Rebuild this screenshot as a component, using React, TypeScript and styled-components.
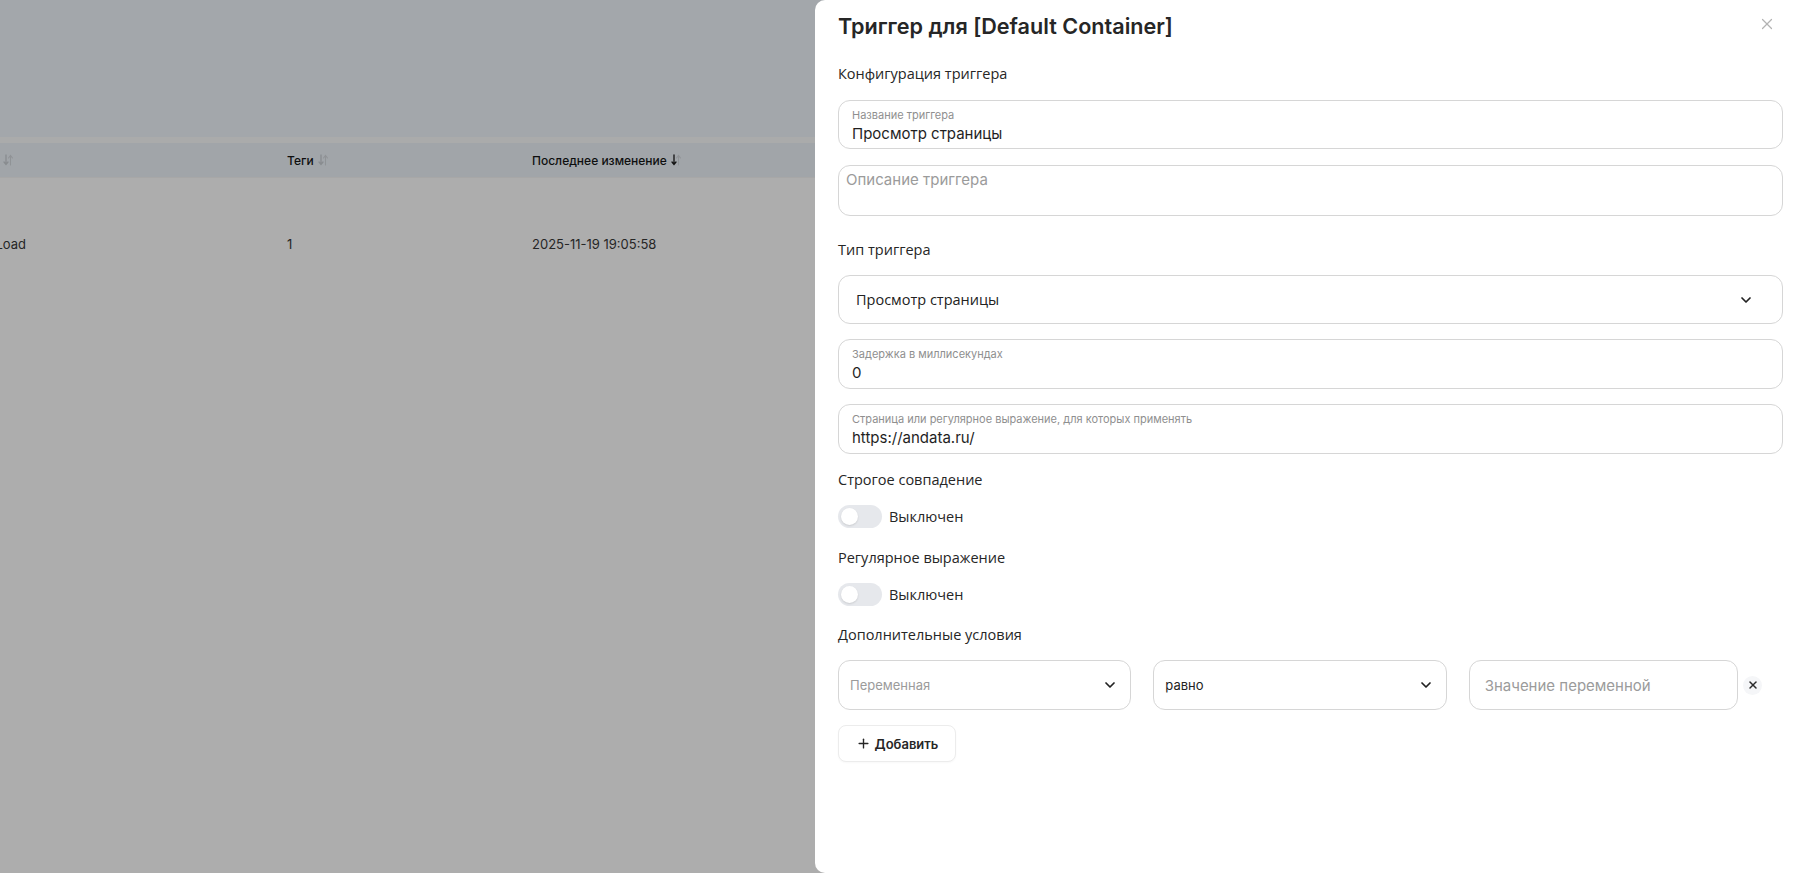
import * as React from 'react';
import styled, { createGlobalStyle } from 'styled-components';
import { X, ChevronDown, Plus } from 'lucide-react';

const GlobalStyle = createGlobalStyle`
  html, body {
    margin: 0;
    padding: 0;
    height: 100%;
    overflow: hidden;
    font-family: Inter, 'Noto Sans', sans-serif;
    color: #1f1f1f;
  }
  * {
    box-sizing: border-box;
  }
`;

/* ---------- list page under the drawer ---------- */

const Page = styled.div`
  height: 100vh;
  background: #ffffff;
  overflow: hidden;
`;

const TopArea = styled.div`
  height: 137px;
  background: #f0f7fc;
`;

const HeadDivider = styled.div`
  height: 6px;
  background: #fbfcfd;
`;

const TableGrid = styled.div`
  display: grid;
  grid-template-columns: 345px 245px 1fr;
  margin-left: -58px;
  align-items: center;
`;

const TableHead = styled(TableGrid)`
  height: 34px;
  background: #edf4fa;
  font-size: 12px;
  font-weight: 500;
  color: #161616;
`;

const TableRow = styled(TableGrid)`
  height: 132px;
  border-top: 1px solid #f7f7f7;
  font-size: 13px;
  color: #383838;
`;

const HeadCell = styled.div`
  display: flex;
  align-items: center;
  gap: 4px;
  white-space: nowrap;
`;

const Cell = styled.div`
  white-space: nowrap;
`;

const SortIcon = ({ active }: { active?: 'down' }) => (
  <svg width="10" height="12" viewBox="0 0 10 12" fill="none">
    <path
      d="M3 1v9M1 8l2 2.5L5 8"
      stroke={active === 'down' ? '#1a1a1a' : '#c9ced3'}
      strokeWidth="1.3"
      strokeLinecap="round"
    />
    <path d="M7.5 11V2M5.5 4l2-2.5 2 2.5" stroke="#d5d9dd" strokeWidth="1.1" strokeLinecap="round" />
  </svg>
);

const Overlay = styled.div`
  position: fixed;
  inset: 0;
  background: rgba(0, 0, 0, 0.32);
`;

/* ---------- drawer ---------- */

const Drawer = styled.aside`
  position: fixed;
  top: 0;
  right: 0;
  bottom: 0;
  width: 978px;
  background: #ffffff;
  border-radius: 10px 0 0 10px;
  padding: 10px 10px 0 23px;
  display: flex;
  flex-direction: column;
`;

const DrawerHeader = styled.div`
  display: flex;
  align-items: center;
  justify-content: space-between;
  height: 32px;
`;

const Title = styled.h2`
  margin: 0;
  font-family: Inter, sans-serif;
  font-size: 21.6px;
  font-weight: 600;
  line-height: 32px;
  color: #262626;
`;

const CloseButton = styled.button`
  border: none;
  background: none;
  padding: 0;
  margin: -4px 7px 0 0;
  display: flex;
  color: #b3b3b3;
  cursor: pointer;
`;

const Form = styled.div`
  display: flex;
  flex-direction: column;
  gap: 15px;
`;

const SectionLabel = styled.div<{ $offset?: number }>`
  margin-top: ${(p) => p.$offset ?? 1}px;
  font-family: 'Open Sans', 'Noto Sans', sans-serif;
  font-size: 14.5px;
  line-height: 20px;
  color: #262626;
`;

const FieldBox = styled.div<{ $height?: number; $gap?: number }>`
  height: ${(p) => p.$height ?? 50}px;
  margin-top: ${(p) => p.$gap ?? 0}px;
  border: 1px solid #d6d6d6;
  border-radius: 12px;
  background: #fff;
`;

const FloatingField = styled(FieldBox)`
  padding: 6px 13px 0;
`;

const FieldLabel = styled.div`
  font-size: 11px;
  line-height: 16px;
  color: #8f8f8f;
`;

const FieldValue = styled.div`
  font-size: 15px;
  line-height: 21px;
  color: #1f1f1f;
`;

const TextArea = styled(FieldBox)`
  padding: 4px 7px;
  font-size: 15px;
  line-height: 20px;
  color: #9b9b9b;
`;

const SelectBox = styled(FieldBox)<{ $pl: number; $pr: number }>`
  display: flex;
  align-items: center;
  justify-content: space-between;
  padding: 0 ${(p) => p.$pr}px 0 ${(p) => p.$pl}px;
  color: #222;
`;

const SelectText = styled.span<{ $muted?: boolean; $size: number; $open?: boolean }>`
  font-family: ${(p) => (p.$open ? "'Open Sans', 'Noto Sans', sans-serif" : 'Inter, sans-serif')};
  font-size: ${(p) => p.$size}px;
  color: ${(p) => (p.$muted ? '#9b9b9b' : '#222')};
`;

const ToggleRow = styled.div`
  display: flex;
  align-items: center;
  gap: 7px;
  height: 23px;
`;

const Track = styled.span`
  width: 44px;
  height: 23px;
  border-radius: 12px;
  background: #e6e8ec;
  padding: 3px;
  display: flex;
`;

const Knob = styled.span`
  width: 17px;
  height: 17px;
  border-radius: 50%;
  background: #fff;
  box-shadow: 0 1px 2px rgba(0, 0, 0, 0.12);
`;

const ToggleText = styled.span`
  font-family: 'Open Sans', 'Noto Sans', sans-serif;
  font-size: 14.5px;
  color: #262626;
`;

const ConditionRow = styled.div`
  display: grid;
  grid-template-columns: repeat(3, 1fr);
  gap: 22px;
  padding-right: 21px;
`;

const ValueCell = styled.div`
  display: flex;
  align-items: center;
  gap: 5px;
`;

const ValueInput = styled(FieldBox)`
  flex: 1;
  display: flex;
  align-items: center;
  padding: 0 15px;
  font-size: 15px;
  color: #9b9b9b;
`;

const RemoveButton = styled.button`
  width: 19px;
  height: 19px;
  border: none;
  border-radius: 50%;
  background: #f5f6f8;
  display: flex;
  align-items: center;
  justify-content: center;
  padding: 0;
  color: #2b2b2b;
  cursor: pointer;
`;

const AddButton = styled.button`
  align-self: flex-start;
  width: 118px;
  height: 37px;
  border: 1px solid #ececec;
  border-radius: 8px;
  background: #fff;
  display: flex;
  align-items: center;
  justify-content: center;
  gap: 4px;
  font-family: Inter, sans-serif;
  font-size: 13px;
  font-weight: 600;
  color: #262626;
  box-shadow: 0 1px 2px rgba(0, 0, 0, 0.03);
  cursor: pointer;
`;

const Toggle = ({ label }: { label: string }) => (
  <ToggleRow>
    <Track>
      <Knob />
    </Track>
    <ToggleText>{label}</ToggleText>
  </ToggleRow>
);

export default function App() {
  return (
    <>
      <GlobalStyle />
      <Page>
        <TopArea />
        <HeadDivider />
        <TableHead>
          <HeadCell>
            Название <SortIcon />
          </HeadCell>
          <HeadCell>
            Теги <SortIcon />
          </HeadCell>
          <HeadCell>
            Последнее изменение <SortIcon active="down" />
          </HeadCell>
        </TableHead>
        <TableRow>
          <Cell>Window Load</Cell>
          <Cell>1</Cell>
          <Cell>2025-11-19 19:05:58</Cell>
        </TableRow>
      </Page>
      <Overlay />
      <Drawer>
        <DrawerHeader>
          <Title>Триггер для [Default Container]</Title>
          <CloseButton aria-label="Закрыть">
            <X size={18} strokeWidth={1.6} />
          </CloseButton>
        </DrawerHeader>
        <Form>
          <SectionLabel $offset={22}>Конфигурация триггера</SectionLabel>
          <FloatingField $height={49} $gap={1}>
            <FieldLabel>Название триггера</FieldLabel>
            <FieldValue>Просмотр страницы</FieldValue>
          </FloatingField>
          <TextArea $height={51} $gap={1}>
            Описание триггера
          </TextArea>

          <SectionLabel $offset={9}>Тип триггера</SectionLabel>
          <SelectBox $height={49} $pl={17} $pr={28}>
            <SelectText $size={14.5} $open>
              Просмотр страницы
            </SelectText>
            <ChevronDown size={16} strokeWidth={2.6} />
          </SelectBox>
          <FloatingField>
            <FieldLabel>Задержка в миллисекундах</FieldLabel>
            <FieldValue>0</FieldValue>
          </FloatingField>
          <FloatingField>
            <FieldLabel>Страница или регулярное выражение, для которых применять</FieldLabel>
            <FieldValue>https://andata.ru/</FieldValue>
          </FloatingField>

          <SectionLabel>Строгое совпадение</SectionLabel>
          <Toggle label="Выключен" />

          <SectionLabel $offset={5}>Регулярное выражение</SectionLabel>
          <Toggle label="Выключен" />

          <SectionLabel $offset={4}>Дополнительные условия</SectionLabel>
          <ConditionRow>
            <SelectBox $pl={11} $pr={12}>
              <SelectText $size={13} $muted>
                Переменная
              </SelectText>
              <ChevronDown size={16} strokeWidth={2.6} />
            </SelectBox>
            <SelectBox $pl={11} $pr={12}>
              <SelectText $size={13}>равно</SelectText>
              <ChevronDown size={16} strokeWidth={2.6} />
            </SelectBox>
            <ValueCell>
              <ValueInput>Значение переменной</ValueInput>
              <RemoveButton aria-label="Удалить">
                <X size={12} strokeWidth={3} />
              </RemoveButton>
            </ValueCell>
          </ConditionRow>
          <AddButton>
            <Plus size={15} strokeWidth={2.2} />
            Добавить
          </AddButton>
        </Form>
      </Drawer>
    </>
  );
}
